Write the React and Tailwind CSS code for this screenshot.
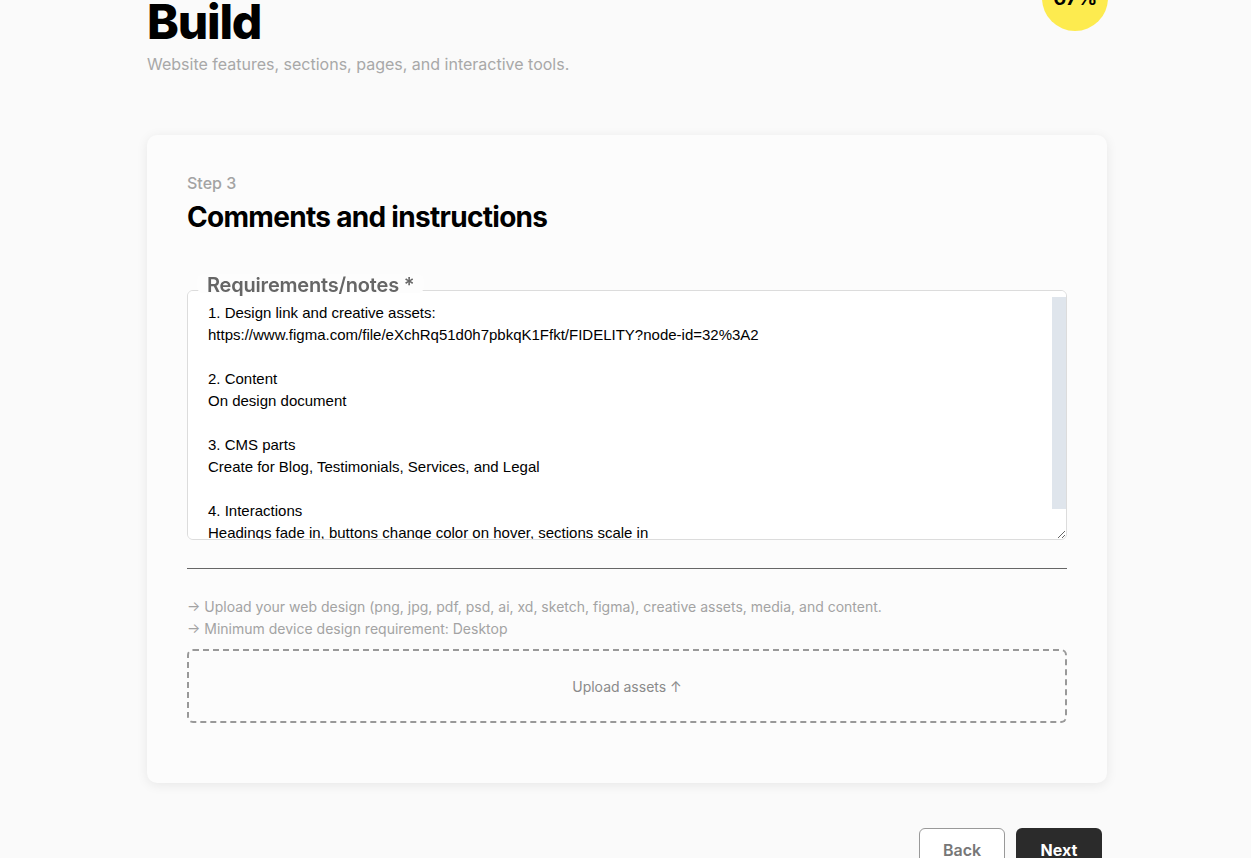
import React from 'react';

const notes = `1. Design link and creative assets:
https://www.figma.com/file/eXchRq51d0h7pbkqK1Ffkt/FIDELITY?node-id=32%3A2

2. Content
On design document

3. CMS parts
Create for Blog, Testimonials, Services, and Legal

4. Interactions
Headings fade in, buttons change color on hover, sections scale in

5. Other
Add a contact form and newsletter signup`;

const App = () => {
  return (
    <div className="min-h-screen bg-[#fafafa] font-['Inter',sans-serif] overflow-hidden">
      <div className="w-[960px] ml-[147px]">
        {/* header (page scrolled a bit) */}
        <div className="flex justify-between items-start -mt-[35px]">
          <div className="pt-[33px]">
            <h1 className="text-[48px] leading-none font-extrabold tracking-[-0.025em] text-black">Build</h1>
            <p className="mt-[8px] text-[16px] leading-[20px] text-[#a8a8a8]">
              Website features, sections, pages, and interactive tools.
            </p>
          </div>
          <div className="w-[66px] h-[66px] rounded-full bg-[#fdeb4f] flex items-center justify-center mr-[-1px]">
            <span className="text-[20px] font-bold text-black tracking-tight">67%</span>
          </div>
        </div>

        {/* card */}
        <div className="mt-[61px] bg-[#fcfcfc] rounded-[10px] shadow-[0_2px_12px_rgba(0,0,0,0.08)] px-[40px] pt-[40px] pb-[60px]">
          <p className="text-[16px] leading-[16px] font-medium text-[#a3a3a3]">Step 3</p>
          <h2 className="mt-[10px] text-[28px] leading-[32px] font-bold tracking-[-0.025em] text-black">Comments and instructions</h2>

          <div className="relative mt-[57px]">
            <span className="absolute z-10 left-[10px] -top-[16px] px-[10px] pt-[1px] h-[19px] bg-[#fdfdfd] rounded-[6px] text-[20px] leading-[20px] font-semibold text-[#666] tracking-[-0.01em]">
              Requirements/notes *
            </span>
            <textarea
              readOnly
              defaultValue={notes}
              className="block w-full h-[250px] bg-white border border-[#dcdcdc] rounded-[6px] pl-[20px] pr-[20px] pt-[11px] pb-[4px] text-[15px] leading-[22px] text-black font-['Liberation_Sans',Arial,sans-serif] outline-none resize-y overflow-y-scroll"
            />
            {/* scrollbar thumb */}
            <div className="absolute right-[1px] top-[7px] w-[14px] h-[212px] bg-[#dfe5ec] pointer-events-none" />
          </div>

          <div className="mt-[28px] border-t border-[#666]" />

          <div className="mt-[27px] text-[14px] leading-[22px] text-[#a3a3a3]">
            <p>→ Upload your web design (png, jpg, pdf, psd, ai, xd, sketch, figma), creative assets, media, and content.</p>
            <p>→ Minimum device design requirement: Desktop</p>
          </div>

          <div className="mt-[9px] h-[74px] border-2 border-dashed border-[#999] rounded-[6px] flex items-center justify-center">
            <span className="text-[14px] text-[#8a8a8a]">Upload assets ↑</span>
          </div>
        </div>

        {/* footer buttons */}
        <div className="mt-[45px] flex justify-end gap-[11px] pr-[5px]">
          <button className="w-[86px] h-[44px] rounded-[6px] border border-[#999] bg-white text-[16px] font-semibold text-[#777]">Back</button>
          <button className="w-[86px] h-[44px] rounded-[6px] bg-[#2b2b2b] text-[16px] font-bold text-white">Next</button>
        </div>
      </div>
    </div>
  );
};

export default App;
